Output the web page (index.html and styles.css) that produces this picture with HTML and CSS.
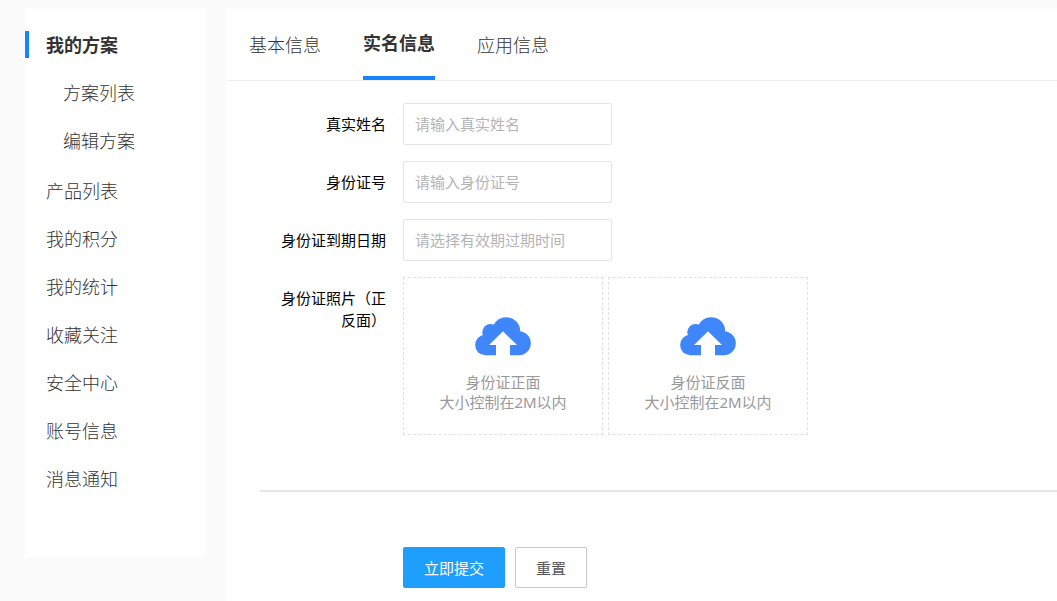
FILE: index.html
```html
<!DOCTYPE html>
<html lang="zh-CN">

<head>
    <meta charset="UTF-8">
    <meta name="viewport" content="width=device-width, initial-scale=1.0">
    <title>实名信息</title>
    <link rel="stylesheet" href="styles.css">
</head>

<body>

    <!-- cloud icon shared by both upload boxes -->
    <svg class="sprite" width="0" height="0" aria-hidden="true">
        <symbol id="cloud" viewBox="0 0 56 39">
            <g fill="#3f86fb">
                <circle cx="10.3" cy="28" r="10.2" />
                <circle cx="15.5" cy="15.2" r="8.2" />
                <circle cx="31.2" cy="14.2" r="14" />
                <circle cx="43.8" cy="26.2" r="12" />
                <path d="M10 38.2V18L20 10H36L46 20L44 38.2Z" />
            </g>
            <path fill="#fff" d="M28 14.3L42 28H35V39H21V28H14Z" />
        </symbol>
    </svg>

    <div class="layout">
        <nav class="sidebar">
            <ul class="menu">
                <li class="active"><a href="#">我的方案</a>
                    <ul class="submenu">
                        <li><a href="#">方案列表</a></li>
                        <li><a href="#">编辑方案</a></li>
                    </ul>
                </li>
                <li><a href="#">产品列表</a></li>
                <li><a href="#">我的积分</a></li>
                <li><a href="#">我的统计</a></li>
                <li><a href="#">收藏关注</a></li>
                <li><a href="#">安全中心</a></li>
                <li><a href="#">账号信息</a></li>
                <li><a href="#">消息通知</a></li>
            </ul>
        </nav>

        <main class="content">
            <div class="tabs">
                <a href="#" class="tab">基本信息</a>
                <a href="#" class="tab tab-active">实名信息</a>
                <a href="#" class="tab">应用信息</a>
            </div>

            <form class="form">
                <div class="form-item">
                    <label class="form-label" for="realname">真实姓名</label>
                    <input class="form-input" type="text" id="realname" name="realname" placeholder="请输入真实姓名">
                </div>
                <div class="form-item">
                    <label class="form-label" for="idcard">身份证号</label>
                    <input class="form-input" type="text" id="idcard" name="idcard" placeholder="请输入身份证号">
                </div>
                <div class="form-item">
                    <label class="form-label" for="expire">身份证到期日期</label>
                    <input class="form-input" type="text" id="expire" name="expire" placeholder="请选择有效期过期时间">
                </div>
                <div class="form-item" role="group" aria-labelledby="photo-label">
                    <span class="form-label" id="photo-label">身份证照片（正反面）</span>
                    <div class="uploads">
                        <button type="button" class="upload">
                            <svg class="upload-icon" aria-hidden="true"><use href="#cloud" /></svg>
                            <span>身份证正面</span>
                            <span>大小控制在2M以内</span>
                        </button>
                        <button type="button" class="upload">
                            <svg class="upload-icon" aria-hidden="true"><use href="#cloud" /></svg>
                            <span>身份证反面</span>
                            <span>大小控制在2M以内</span>
                        </button>
                    </div>
                </div>
                <hr class="line">
                <div class="form-buttons">
                    <button type="submit" class="btn btn-primary">立即提交</button>
                    <button type="reset" class="btn">重置</button>
                </div>
            </form>
        </main>
    </div>

</body>

</html>
```
FILE: styles.css
```css
* {
    box-sizing: border-box;
}

body {
    margin: 0;
    background-color: #fbfbfb;
    color: #333;
    font-family: "Noto Sans", "Noto Sans CJK SC", sans-serif;
    font-size: 15px;
}

ul {
    list-style: none;
    margin: 0;
    padding: 0;
}

a {
    color: inherit;
    text-decoration: none;
}

button,
input {
    font: inherit;
}

.sprite {
    position: absolute;
}

.layout {
    display: flex;
    align-items: flex-start;
    gap: 22px;
    min-height: 100vh;
    padding: 9px 0 0 25px;
}

/* Sidebar */
.sidebar {
    flex: 0 0 180px;
    padding: 11px 0 55px;
    background-color: #fff;
    font-size: 18px;
    font-weight: 300;
}

.menu a {
    display: flex;
    align-items: center;
    height: 48px;
    padding-left: 21px;
}

.menu .active > a {
    font-weight: bold;
    background: linear-gradient(#1684fc, #1684fc) left center / 4px 27px no-repeat;
}

.submenu {
    padding-bottom: 2px;
}

.menu .submenu a {
    padding-left: 38px;
}

/* Content */
.content {
    flex: 1;
    align-self: stretch;
    min-width: 0;
    background-color: #fff;
}

.tabs {
    display: flex;
    gap: 42px;
    height: 72px;
    padding-left: 22px;
    border-bottom: 1px solid #eee;
    font-size: 18px;
    font-weight: 300;
}

.tab {
    display: flex;
    align-items: center;
    padding-bottom: 2px;
}

.tab-active {
    border-bottom: 4px solid #1684fc;
    font-weight: bold;
}

.form {
    display: flex;
    flex-direction: column;
    gap: 16px;
    padding: 22px 0 13px 33px;
}

.form-item {
    display: flex;
    align-items: flex-start;
}

.form-label {
    flex: 0 0 143px;
    padding: 10px 17px 10px 18px;
    color: #000;
    line-height: 22px;
    text-align: right;
}

.form-input {
    width: 209px;
    height: 42px;
    padding: 0 11px;
    border: 1px solid #e6e6e6;
    border-radius: 2px;
    background-color: #fff;
}

.form-input::placeholder {
    color: #b4b4b4;
}

.uploads {
    display: flex;
    flex-wrap: wrap;
    gap: 5px;
}

.upload {
    display: flex;
    flex-direction: column;
    align-items: center;
    width: 200px;
    padding: 39px 0 22px;
    border: 1px dashed #e2e2e2;
    background-color: #fff;
    color: #999;
    line-height: 20px;
    cursor: pointer;
}

.upload-icon {
    width: 56px;
    height: 39px;
    margin-bottom: 16px;
}

.line {
    width: 100%;
    height: 2px;
    margin: 39px 0;
    border: none;
    background-color: #e6e6e6;
}

.form-buttons {
    display: flex;
    gap: 10px;
    padding-left: 143px;
}

.btn {
    height: 41px;
    padding: 0 20px;
    border: 1px solid #c9c9c9;
    border-radius: 2px;
    background-color: #fff;
    color: #555;
    cursor: pointer;
}

.btn-primary {
    border-color: #1e9fff;
    background-color: #1e9fff;
    color: #fff;
}
```
